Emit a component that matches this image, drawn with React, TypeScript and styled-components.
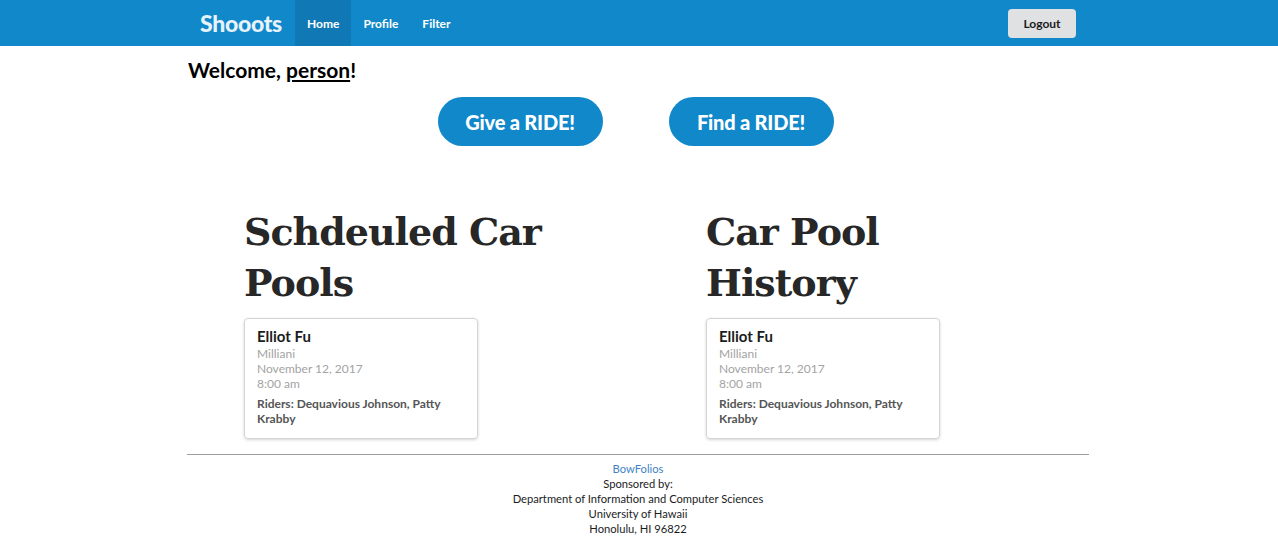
import React from "react";
import styled, { createGlobalStyle } from "styled-components";

const Global = createGlobalStyle`
  html, body { margin: 0; padding: 0; background: #fff; }
  body { font-family: Lato, "Open Sans", sans-serif; color: #1b1c1d; font-size: 14px; }
  * { box-sizing: border-box; }
`;

const NavBar = styled.header`
  background: #1188ca;
  height: 46px;
`;

const NavInner = styled.nav`
  width: 902px;
  margin-left: calc(50% - 452px);
  height: 100%;
  display: flex;
  align-items: stretch;
  padding: 0 13px;
`;

const Brand = styled.div`
  font-family: Lato, sans-serif;
  font-weight: 900;
  font-size: 23px;
  color: #e6f3fb;
  display: flex;
  align-items: center;
  margin-right: 13px;
  letter-spacing: -0.3px;
`;

const NavItem = styled.a<{ $active?: boolean }>`
  display: flex;
  align-items: center;
  padding: 0 12px;
  font-weight: 700;
  font-size: 12px;
  color: #fff;
  text-decoration: none;
  background: ${(p) => (p.$active ? "#0f78b5" : "transparent")};
`;

const Spacer = styled.div`
  flex: 1;
`;

const LogoutButton = styled.button`
  align-self: center;
  width: 68px;
  height: 29px;
  border: none;
  border-radius: 4px;
  background: #e0e1e2;
  color: #1b1c1d;
  font-family: Lato, sans-serif;
  font-weight: 700;
  font-size: 12px;
  padding: 0;
`;

const Page = styled.main`
  width: 902px;
  margin-left: calc(50% - 452px);
`;

const Welcome = styled.h2`
  margin: 12px 0 0 1px;
  font-family: Lato, sans-serif;
  font-weight: 700;
  font-size: 21px;
  line-height: 24px;
  color: #000;
  a { color: #000; text-decoration: underline; }
`;

const ActionRow = styled.div`
  display: flex;
  justify-content: center;
  gap: 66px;
  margin-top: 15px;
  padding-right: 5px;
`;

const RideButton = styled.button`
  width: 165px;
  height: 49px;
  border: none;
  border-radius: 25px;
  background: #1188ca;
  color: #fff;
  font-family: Lato, sans-serif;
  font-weight: 900;
  font-size: 20px;
  letter-spacing: -0.2px;
  padding: 0;
`;

const Columns = styled.div`
  display: grid;
  grid-template-columns: 324px 324px;
  column-gap: 138px;
  justify-content: center;
  margin-top: 60px;
  padding-right: 2px;
`;

const Column = styled.section``;

const ColumnTitle = styled.h1`
  margin: 0 0 10px;
  font-family: "DejaVu Serif", Georgia, serif;
  font-weight: 700;
  font-size: 38px;
  line-height: 51px;
  color: #272727;
  letter-spacing: -1px;
`;

const Card = styled.div`
  width: 234px;
  border: 1px solid #d4d4d5;
  border-radius: 4px;
  box-shadow: 0 1px 3px 0 #d4d4d5;
  padding: 8px 12px 12px;
`;

const CardName = styled.div`
  font-weight: 700;
  font-size: 15px;
  line-height: 18px;
  color: #1b1c1d;
  margin-bottom: 1px;
`;

const CardMeta = styled.div`
  font-size: 12px;
  line-height: 15px;
  color: #a3a3a3;
`;

const CardRiders = styled.div`
  margin-top: 5px;
  font-weight: 700;
  font-size: 12px;
  line-height: 15px;
  color: #555;
`;

const Footer = styled.footer`
  margin-top: 15px;
  border-top: 1px solid #9e9e9e;
  padding-top: 6px;
  text-align: center;
  font-size: 11.2px;
  line-height: 15px;
  color: #1b1c1d;
`;

const FooterLink = styled.a`
  color: #4183c4;
  text-decoration: none;
`;

const rides = [
  {
    name: "Elliot Fu",
    place: "Milliani",
    date: "November 12, 2017",
    time: "8:00 am",
    riders: "Dequavious Johnson, Patty Krabby",
  },
];

function RideCard({ r }: { r: (typeof rides)[number] }) {
  return (
    <Card>
      <CardName>{r.name}</CardName>
      <CardMeta>{r.place}</CardMeta>
      <CardMeta>{r.date}</CardMeta>
      <CardMeta>{r.time}</CardMeta>
      <CardRiders>Riders: {r.riders}</CardRiders>
    </Card>
  );
}

export default function App() {
  return (
    <>
      <Global />
      <NavBar>
        <NavInner>
          <Brand>Shooots</Brand>
          <NavItem $active>Home</NavItem>
          <NavItem>Profile</NavItem>
          <NavItem>Filter</NavItem>
          <Spacer />
          <LogoutButton>Logout</LogoutButton>
        </NavInner>
      </NavBar>
      <Page>
        <Welcome>
          Welcome, <a href="#">person</a>!
        </Welcome>
        <ActionRow>
          <RideButton>Give a RIDE!</RideButton>
          <RideButton>Find a RIDE!</RideButton>
        </ActionRow>
        <Columns>
          <Column>
            <ColumnTitle>Schdeuled Car Pools</ColumnTitle>
            <RideCard r={rides[0]} />
          </Column>
          <Column>
            <ColumnTitle>Car Pool History</ColumnTitle>
            <RideCard r={rides[0]} />
          </Column>
        </Columns>
        <Footer>
          <FooterLink href="#">BowFolios</FooterLink>
          <div>Sponsored by:</div>
          <div>Department of Information and Computer Sciences</div>
          <div>University of Hawaii</div>
          <div>Honolulu, HI 96822</div>
        </Footer>
      </Page>
    </>
  );
}
